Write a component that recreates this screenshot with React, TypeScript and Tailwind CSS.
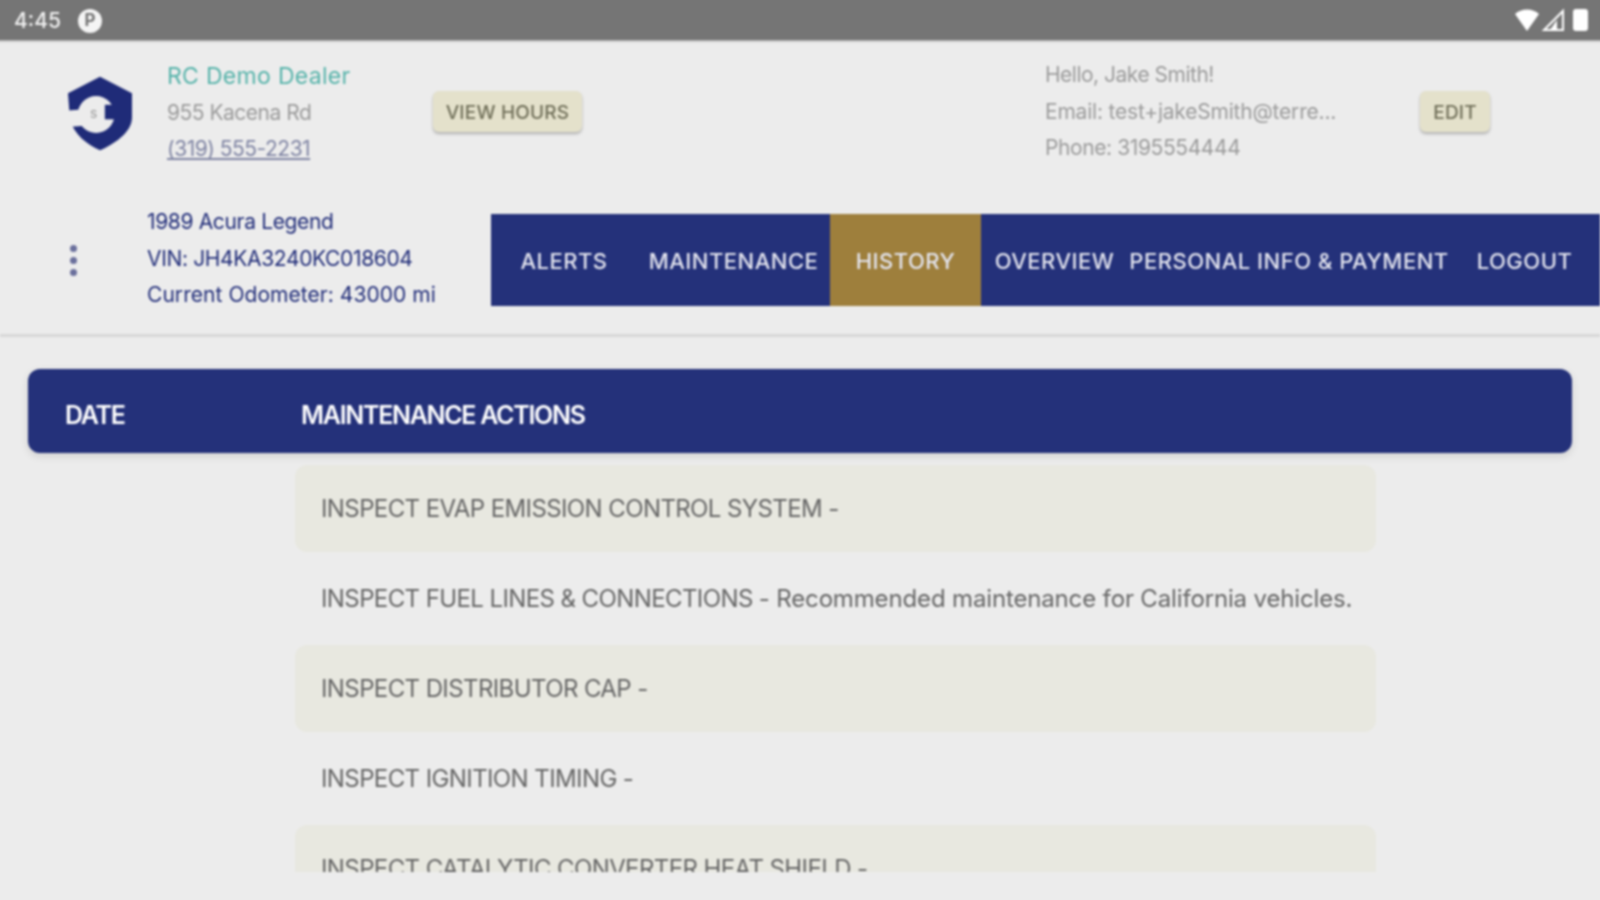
const NAV_ITEMS = [
  { label: 'ALERTS', width: 'w-[146px]' },
  { label: 'MAINTENANCE', width: 'w-[193px]' },
  { label: 'HISTORY', width: 'w-[151px]', active: true },
  { label: 'OVERVIEW', width: 'w-[147px]' },
  { label: 'PERSONAL INFO & PAYMENT', width: 'w-[322px]' },
  { label: 'LOGOUT', width: 'w-[149px]' },
]

const ACTIONS = [
  { title: 'INSPECT EVAP EMISSION CONTROL SYSTEM -' },
  { title: 'INSPECT FUEL LINES & CONNECTIONS -', note: 'Recommended maintenance for California vehicles.' },
  { title: 'INSPECT DISTRIBUTOR CAP -' },
  { title: 'INSPECT IGNITION TIMING -' },
  { title: 'INSPECT CATALYTIC CONVERTER HEAT SHIELD -' },
]

function StatusBar() {
  return (
    <div className="flex h-[43px] items-center justify-between bg-[#757575] pl-[17px] pr-[15px] pt-[3px] shadow-[0_1px_2px_rgba(0,0,0,0.35)]">
      <div className="flex items-center gap-[17px] pt-[2px]">
        <span className="text-[21px] font-medium text-[#f1f1f1]">4:45</span>
        <span className="flex h-6 w-6 items-center justify-center rounded-full bg-[#f4f4f4] text-[17px] font-bold text-[#757575]">P</span>
      </div>
      <div className="flex items-center gap-[7px]">
        <svg width="51" height="24" viewBox="0 0 51 24">
          <path d="M0 6 C6 0 18 0 24 6 L12 23 Z" fill="#fff" />
          <path d="M48 3 V22 H29 Z" fill="none" stroke="#fff" strokeWidth="2" />
          <path d="M42 12 V22 H35 Z" fill="#fff" />
        </svg>
        <span className="h-[22px] w-[15px] rounded-[3px] bg-white" />
      </div>
    </div>
  )
}

function Logo() {
  return (
    <svg width="64" height="75" viewBox="0 0 66 76">
      <path d="M33 0 L66 17 V42 C66 58 46 70 33 76 C20 70 6 60 2 44 L0 17 Z" fill="#1f2b78" />
      <circle cx="29" cy="39" r="19" fill="#ececec" />
      <path d="M-1 35 L24 33 L24 50 L-1 52 Z" fill="#ececec" />
      <path d="M38 29 H55 V44 H38 Z" fill="#1f2b78" />
      <text x="23" y="43" fontSize="11" fill="#8a8a8a" fontFamily="Inter, sans-serif">S</text>
    </svg>
  )
}

function Button({ label, className }: { label: string; className: string }) {
  return (
    <button
      type="button"
      className={`flex h-[41px] items-center justify-center rounded-md bg-[#e4e1cb] pt-[3px] text-[19px] font-medium tracking-[0.2px] text-[#6f6e58] shadow-[0_2px_3px_rgba(0,0,0,0.25)] ${className}`}
    >
      {label}
    </button>
  )
}

function Header() {
  return (
    <div className="flex h-[297px] flex-col border-b-[3px] border-[#d8d8d8]">
      <div className="flex h-[174px] items-start pl-[68px] pt-[18px]">
        <div className="mt-[18px]">
          <Logo />
        </div>
        <div className="ml-[35px] flex w-[266px] flex-col text-[21px] leading-[36.7px] tracking-[-0.5px]">
          <span className="text-[23px] tracking-[0.3px] text-[#56b3aa]">RC Demo Dealer</span>
          <span className="text-[#9b9b9b]">955 Kacena Rd</span>
          <span className="text-[#7f84a3] underline">(319) 555-2231</span>
        </div>
        <Button label="VIEW HOURS" className="mt-[33px] w-[149px]" />
        <div className="-mt-px ml-[463px] flex w-[375px] flex-col text-[21px] leading-[36.7px] tracking-[-0.5px] text-[#9b9b9b]">
          <span>Hello, Jake Smith!</span>
          <span className="tracking-[-0.2px]">Email: test+jakeSmith@terre...</span>
          <span className="tracking-[-0.4px]">Phone: 3195554444</span>
        </div>
        <Button label="EDIT" className="mt-[33px] w-[70px]" />
      </div>
      <div className="flex h-[92px] items-center">
        <div className="ml-[70px] flex flex-col gap-[5px]">
          <span className="h-[7px] w-[7px] rounded-full bg-[#6a6f9c]" />
          <span className="h-[7px] w-[7px] rounded-full bg-[#6a6f9c]" />
          <span className="h-[7px] w-[7px] rounded-full bg-[#6a6f9c]" />
        </div>
        <div className="-mt-[2px] ml-[70px] flex w-[344px] flex-col text-[21px] leading-[36.5px] tracking-[-0.35px] text-[#1f2b78]">
          <span>1989 Acura Legend</span>
          <span>VIN: JH4KA3240KC018604</span>
          <span className="tracking-[0.05px]">Current Odometer: 43000 mi</span>
        </div>
        <nav className="flex h-[92px] flex-1 bg-[#24317a]">
          {NAV_ITEMS.map((item) => (
            <div
              key={item.label}
              className={`flex items-center justify-center pt-[2px] text-[22px] font-medium tracking-[0.5px] text-[#e4e5ef] ${item.width} ${item.active ? 'bg-[#9e7f3c]' : ''}`}
            >
              {item.label}
            </div>
          ))}
        </nav>
      </div>
    </div>
  )
}

// The reference is a soft upscaled screenshot, so the page is blurred a little.
// The blurred layer overhangs the window by 3px to keep the edges from fading.
export default function App() {
  return (
    <div className="h-screen overflow-hidden bg-[#ececec]">
      <div className="-m-[3px] flex h-[906px] w-[1606px] flex-col bg-[#ececec] font-['Inter',sans-serif] blur-[0.8px]">
        <StatusBar />
        <div className="flex flex-col px-[3px]">
          <Header />
          <div className="mx-[28px] mt-[32px] flex h-[84px] items-center rounded-xl bg-[#24317a] pl-[37px] pt-[10px] text-[25px] font-semibold tracking-[-1.3px] text-white shadow-[0_3px_8px_rgba(0,0,0,0.12)]">
            <span className="w-[236px]">DATE</span>
            <span>MAINTENANCE ACTIONS</span>
          </div>
          <div className="ml-[295px] mt-[12px] h-[407px] w-[1081px] overflow-hidden">
            {ACTIONS.map((action, i) => (
              <div
                key={action.title}
                className={`mb-[3px] flex h-[87px] items-center gap-[7px] rounded-xl pl-[26px] text-[24px] tracking-[-0.6px] text-[#666666] ${i % 2 === 0 ? 'bg-[#e8e8e0]' : ''}`}
              >
                <span>{action.title}</span>
                {action.note && <span className="tracking-[-0.15px]">{action.note}</span>}
              </div>
            ))}
          </div>
        </div>
      </div>
    </div>
  )
}
